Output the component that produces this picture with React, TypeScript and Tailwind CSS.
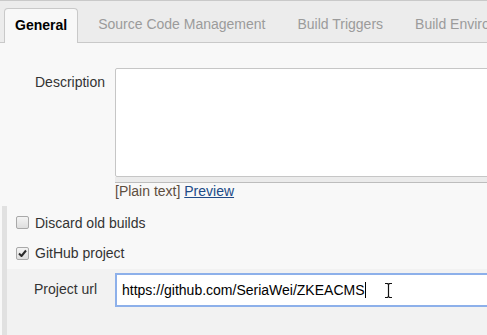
import React from 'react'

const tabs = ['Source Code Management', 'Build Triggers', 'Build Environment']

const Checkbox = ({ checked }: { checked?: boolean }) => (
  <span className="w-[13px] h-[13px] shrink-0 rounded-[2px] border border-[#a9a9a9] bg-gradient-to-b from-[#f4f4f4] to-[#dedede] flex items-center justify-center">
    {checked && (
      <svg width="9" height="9" viewBox="0 0 9 9">
        <path d="M1 4.5 L3.5 7 L8 1.5" fill="none" stroke="#2b2b2b" strokeWidth={2} strokeLinejoin="round" />
      </svg>
    )}
  </span>
)

const App = () => {
  return (
    <div className="w-[487px] h-[335px] overflow-hidden bg-[#f8f8f8] text-[14px] leading-[16px] text-[#333] font-['Liberation_Sans',Arial,sans-serif] flex flex-col">
      {/* Tabs */}
      <div className="h-[43px] shrink-0 border-t border-b border-[#c9c9c9] bg-[#ececec] flex items-end pl-[4px] whitespace-nowrap">
        <div className="h-[35px] -mb-px px-[10px] pt-[8px] rounded-t-[4px] border border-b-0 border-[#c9c9c9] bg-[#f8f8f8] font-bold text-black">
          General
        </div>
        {tabs.map((t, i) => (
          <div key={t} className={`h-[34px] px-[10px] pt-[8px] text-[#9b9b9b] ${i === 0 ? 'ml-[10px]' : 'ml-[12px]'}`}>
            {t}
          </div>
        ))}
      </div>

      {/* Description */}
      <div className="flex mt-[25px]">
        <div className="w-[115px] shrink-0 pl-[35px] pt-[6px]">Description</div>
        <div className="w-[400px] shrink-0">
          <div className="h-[109px] bg-white border border-[#c6c6c6] rounded-[2px]" />
          <div className="h-[6px] bg-[#ebebeb] border-b border-[#bdbdbd]" />
          <div className="text-[#5e4e3e]">
            [Plain text]{' '}
            <a href="#" className="text-[#204a87] underline">Preview</a>
          </div>
        </div>
      </div>

      {/* Options */}
      <div className="mt-[7px] ml-[2px] border-l-[5px] border-[#e1e1e1] flex-1 flex flex-col">
        <div className="h-[31px] pt-[9px] pl-[9px] flex items-start gap-[6px]">
          <span className="mt-[1px]"><Checkbox /></span>
          <span>Discard old builds</span>
        </div>
        <div className="h-[32px] pt-[8px] pl-[9px] flex items-start gap-[6px]">
          <span className="mt-[2px]"><Checkbox checked /></span>
          <span>GitHub project</span>
        </div>

        {/* Nested */}
        <div className="flex-1 bg-[#f2f2f2] pt-[4px] flex">
          <div className="w-[108px] shrink-0 pl-[27px] pt-[8px]">Project url</div>
          <div className="relative w-[400px] shrink-0 h-[34px] bg-white border-2 border-[#8db0ea] flex items-center pl-[5px] pb-px text-black">
            <span>https://github.com/SeriaWei/ZKEACMS</span>
            <span className="w-px h-[16px] bg-black" />
            <svg className="absolute left-[267px] top-[7px]" width="9" height="17" viewBox="0 0 9 17">
              <path d="M1 1.5 H3.5 L4.5 2.5 L5.5 1.5 H8 M4.5 2.5 V14.5 M1 15.5 H3.5 L4.5 14.5 L5.5 15.5 H8" fill="none" stroke="#111" strokeWidth={1.2} />
            </svg>
          </div>
        </div>
      </div>
    </div>
  )
}

export default App
